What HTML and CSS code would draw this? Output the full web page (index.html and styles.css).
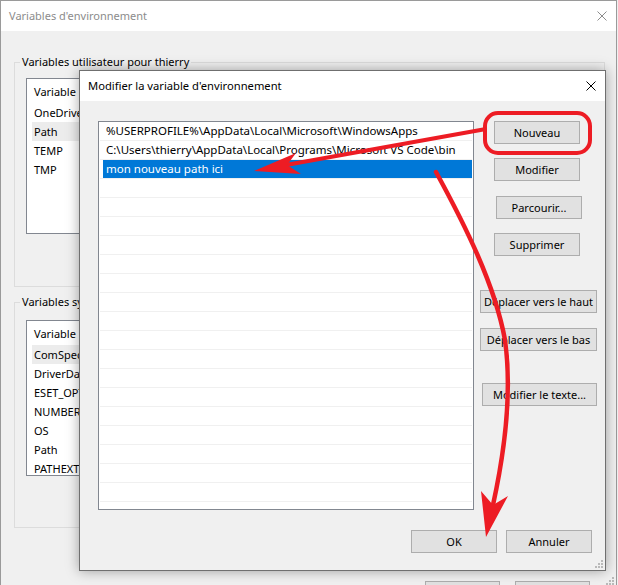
FILE: index.html
```html
<!DOCTYPE html>
<html lang="fr">
<head>
<meta charset="utf-8">
<title>Modifier la variable d'environnement</title>
<link rel="stylesheet" href="styles.css">
</head>
<body>
<div class="bgwin">
  <div class="titlebar">
    <span class="title inactive">Variables d'environnement</span>
    <svg class="xicon" width="10" height="10" viewBox="0 0 10 10"><path d="M0.5 0.5L9.5 9.5M9.5 0.5L0.5 9.5" stroke="#8c8c8c" stroke-width="1"/></svg>
  </div>
  <div class="bgbody">
    <div class="group g1">
      <span class="group-label">Variables utilisateur pour thierry</span>
      <div class="list">
        <div class="lhead"><span class="c1">Variable</span></div>
        <div class="lrow"><span class="c1">OneDrive</span></div>
        <div class="lrow sel"><span class="c1">Path</span></div>
        <div class="lrow"><span class="c1">TEMP</span></div>
        <div class="lrow"><span class="c1">TMP</span></div>
      </div>
    </div>
    <div class="group g2">
      <span class="group-label">Variables système</span>
      <div class="list">
        <div class="lhead"><span class="c1">Variable</span></div>
        <div class="lrow sel"><span class="c1">ComSpec</span></div>
        <div class="lrow"><span class="c1">DriverData</span></div>
        <div class="lrow"><span class="c1">ESET_OPTIONS</span></div>
        <div class="lrow"><span class="c1">NUMBER_OF_PROCESSORS</span></div>
        <div class="lrow"><span class="c1">OS</span></div>
        <div class="lrow"><span class="c1">Path</span></div>
        <div class="lrow"><span class="c1">PATHEXT</span></div>
      </div>
    </div>
    <div class="bgfoot">
      <button class="btn bgbtn" aria-label="OK"></button>
      <button class="btn bgbtn" aria-label="Annuler"></button>
    </div>
  </div>
  <svg class="grip bggrip" width="8" height="8" viewBox="0 0 8 8"><g fill="#b9b9b9"><rect x="6" y="0" width="2" height="2"/><rect x="3" y="3" width="2" height="2"/><rect x="6" y="3" width="2" height="2"/><rect x="0" y="6" width="2" height="2"/><rect x="3" y="6" width="2" height="2"/><rect x="6" y="6" width="2" height="2"/></g></svg>
</div>

<div class="dialog">
  <div class="titlebar dtitle">
    <span class="title">Modifier la variable d'environnement</span>
    <svg class="xicon" width="10" height="10" viewBox="0 0 10 10"><path d="M0.5 0.5L9.5 9.5M9.5 0.5L0.5 9.5" stroke="#000" stroke-width="1"/></svg>
  </div>
  <div class="dbody">
    <div class="plist">
      <div class="prow"><span class="cell">%USERPROFILE%\AppData\Local\Microsoft\WindowsApps</span></div>
      <div class="prow"><span class="cell">C:\Users\thierry\AppData\Local\Programs\Microsoft VS Code\bin</span></div>
      <div class="prow"><span class="cell selected">mon nouveau path ici</span></div>
      <div class="prow"><span class="cell"></span></div>
      <div class="prow"><span class="cell"></span></div>
      <div class="prow"><span class="cell"></span></div>
      <div class="prow"><span class="cell"></span></div>
      <div class="prow"><span class="cell"></span></div>
      <div class="prow"><span class="cell"></span></div>
      <div class="prow"><span class="cell"></span></div>
      <div class="prow"><span class="cell"></span></div>
      <div class="prow"><span class="cell"></span></div>
      <div class="prow"><span class="cell"></span></div>
      <div class="prow"><span class="cell"></span></div>
      <div class="prow"><span class="cell"></span></div>
      <div class="prow"><span class="cell"></span></div>
      <div class="prow"><span class="cell"></span></div>
      <div class="prow"><span class="cell"></span></div>
      <div class="prow"><span class="cell"></span></div>
      <div class="prow"><span class="cell"></span></div>
      <div class="prow"><span class="cell"></span></div>
    </div>
    <div class="side">
      <button class="btn b-nouveau">Nouveau</button>
      <button class="btn b-modifier">Modifier</button>
      <button class="btn b-parcourir">Parcourir...</button>
      <button class="btn b-suppr">Supprimer</button>
      <button class="btn b-haut">Déplacer vers le haut</button>
      <button class="btn b-bas">Déplacer vers le bas</button>
      <button class="btn b-texte">Modifier le texte...</button>
    </div>
  </div>
  <div class="dfoot">
    <button class="btn b-ok">OK</button>
    <button class="btn b-annuler">Annuler</button>
  </div>
  <svg class="grip dgrip" width="8" height="8" viewBox="0 0 8 8"><g fill="#b9b9b9"><rect x="6" y="0" width="2" height="2"/><rect x="3" y="3" width="2" height="2"/><rect x="6" y="3" width="2" height="2"/><rect x="0" y="6" width="2" height="2"/><rect x="3" y="6" width="2" height="2"/><rect x="6" y="6" width="2" height="2"/></g></svg>
</div>

<svg class="annot" width="618" height="585" viewBox="0 0 618 585">
  <rect x="485" y="113" width="105" height="40" rx="13" ry="13" fill="none" stroke="#ed1c24" stroke-width="4"/>
  <path d="M486 129 L286 165" stroke="#ed1c24" stroke-width="4" fill="none"/>
  <polygon points="254,171 296,153 287,165 301,174" fill="#ed1c24"/>
  <path d="M436 172 C465 225 495 285 505 340 C512 390 505 450 493 505" stroke="#ed1c24" stroke-width="4.5" fill="none" stroke-linecap="round"/>
  <polygon points="486,537 481,491 493,505 508,496" fill="#ed1c24"/>
</svg>
</body>
</html>
```
FILE: styles.css
```css
* { box-sizing: border-box; }
html, body { margin: 0; padding: 0; }
body {
  width: 618px;
  height: 585px;
  overflow: hidden;
  position: relative;
  background: #f0f0f0;
  font-family: "Noto Sans", "Segoe UI", "Liberation Sans", sans-serif;
  font-size: 11px;
  color: #000;
}

.bgwin {
  position: relative;
  width: 617px;
  height: 600px;
  border: 1px solid #9a9a9a;
  border-bottom: none;
  background: #f0f0f0;
}

.titlebar {
  height: 30px;
  background: #fff;
  display: flex;
  align-items: center;
  justify-content: space-between;
  padding: 0 9px 0 8px;
}
.title { line-height: 16px; white-space: nowrap; }
.title.inactive { color: #8c8c8c; }
.dtitle .title { font-size: 11.2px; }
.xicon { display: block; flex: none; }

.bgbody { padding: 31px 11px 0 13px; }

.group {
  border: 1px solid #dcdcdc;
}
.g1 { height: 225px; }
.g2 { height: 226px; margin-top: 15px; }
.group-label {
  display: block;
  width: max-content;
  margin: -9px 0 0 5px;
  padding: 0 2px;
  line-height: 16px;
  background: #f0f0f0;
}
.list {
  height: 156px;
  margin: 8px 11px 0 11px;
  border: 1px solid #828790;
  background: #fff;
  overflow: hidden;
}
.g2 .list { margin-top: 10px; }
.lhead {
  height: 24px;
  display: flex;
  align-items: center;
  padding-left: 7px;
}
.lrow {
  height: 19px;
  line-height: 19px;
  display: flex;
  margin-left: 5px;
  padding-left: 2px;
  white-space: nowrap;
}
.lrow.sel { background: #ececec; }
.c1 { width: 170px; flex: none; }

.bgfoot {
  display: flex;
  justify-content: flex-end;
  gap: 15px;
  margin-top: 53px;
  padding-right: 15px;
}
.bgbtn { width: 75px; }

.grip { position: absolute; display: block; }
.bggrip { right: 2px; bottom: 15px; }

.btn {
  height: 23px;
  padding: 0;
  margin: 0;
  border: 1px solid #adadad;
  background: #e1e1e1;
  font-family: inherit;
  font-size: 11px;
  color: #000;
  display: flex;
  align-items: center;
  justify-content: center;
  white-space: nowrap;
  border-radius: 0;
}

.dialog {
  position: absolute;
  left: 79px;
  top: 70px;
  width: 527px;
  height: 501px;
  border: 1px solid #6f6f6f;
  background: #f0f0f0;
  box-shadow: 0 0 12px rgba(0, 0, 0, 0.35);
  display: flex;
  flex-direction: column;
}
.dtitle { flex: none; }
.dbody {
  display: grid;
  grid-template-columns: 376px 1fr;
  column-gap: 6px;
  align-items: start;
  padding: 20px 0 0 18px;
}
.plist {
  height: 389px;
  border: 1px solid #828790;
  background: #fff;
  overflow: hidden;
  font-size: 11.5px;
}
.prow {
  height: 19px;
  margin: 0 1px;
  border-bottom: 1px solid #f0f0f0;
  display: flex;
}
.cell {
  flex: 1;
  height: 18px;
  line-height: 18px;
  margin-left: 3px;
  padding-left: 3px;
  white-space: nowrap;
  overflow: hidden;
}
.cell.selected { background: #0078d7; color: #fff; }

.side { display: flex; flex-direction: column; }
.b-nouveau { width: 86px; margin-left: 14px; }
.b-modifier { width: 86px; margin: 14px 0 0 14px; }
.b-parcourir { width: 86px; margin: 15px 0 0 16px; }
.b-suppr { width: 86px; margin: 14px 0 0 14px; }
.b-haut { width: 117px; margin-top: 34px; }
.b-bas { width: 117px; margin-top: 15px; }
.b-texte { width: 115px; margin: 32px 0 0 2px; }

.dfoot {
  display: flex;
  justify-content: flex-end;
  gap: 9px;
  padding: 20px 13px 0 0;
}
.b-ok, .b-annuler { width: 86px; }
.dgrip { right: 2px; bottom: 2px; }

.annot {
  position: absolute;
  left: 0;
  top: 0;
  pointer-events: none;
}
```
